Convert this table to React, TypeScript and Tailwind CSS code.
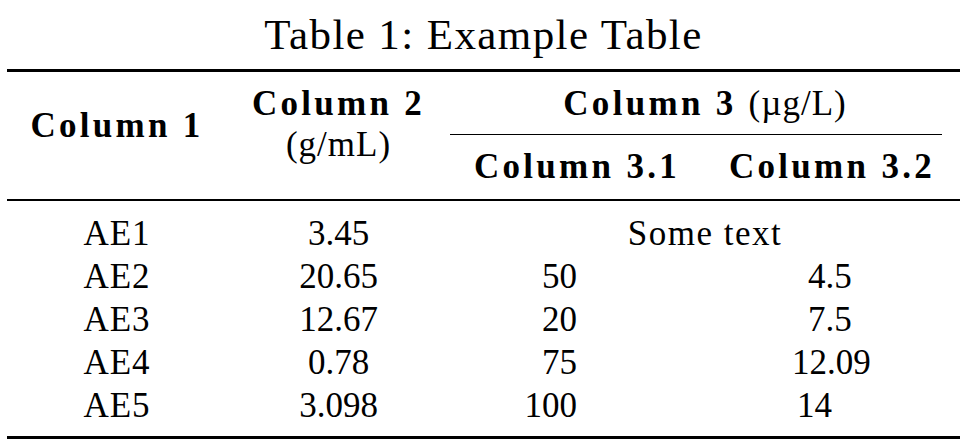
export default function App() {
  const rows = [
    { a: "AE1", b: "3.45", c: "", d: "", dpad: 0, span: "Some text" },
    { a: "AE2", b: "20.65", c: "50", d: "4.5", dpad: 104, span: "" },
    { a: "AE3", b: "12.67", c: "20", d: "7.5", dpad: 104, span: "" },
    { a: "AE4", b: "0.78", c: "75", d: "12.09", dpad: 88, span: "" },
    { a: "AE5", b: "3.098", c: "100", d: "14", dpad: 93, span: "" },
  ];
  return (
    <div
      className="w-[979px] h-[448px] bg-white text-black font-['Liberation_Serif']"
      style={{ fontFamily: '"Liberation Serif", serif' }}
    >
      <div className="ml-[7px] w-[953px] h-[69px] leading-[69px] text-[43px] text-center tracking-[1.4px]">
        Table 1: Example Table
      </div>
      <div className="ml-[7px] w-[953px]">
        <div className="h-[3px] bg-black" />
        <div className="grid grid-cols-[220px_223px_254px_256px] grid-rows-[62px_1px_64px] text-[35px] leading-[35px]">
          <div className="row-span-3 pt-[35.7px] text-center font-bold tracking-[3.3px]">Column 1</div>
          <div className="row-span-3 pt-[13.7px] text-center">
            <div className="font-bold tracking-[3.3px]">Column 2</div>
            <div className="mt-[6px] tracking-[1px]">(g/mL)</div>
          </div>
          <div className="col-span-2 pt-[13.7px] text-center">
            <span className="font-bold tracking-[3.3px]">Column 3 </span>
            <span className="tracking-[1px]">{"(\u00b5g/L)"}</span>
          </div>
          <div className="col-span-2 bg-black mr-[18px]" />
          <div className="pt-[13.7px] text-center font-bold tracking-[3.3px]">Column 3.1</div>
          <div className="pt-[13.7px] text-center font-bold tracking-[3.3px]">Column 3.2</div>
        </div>
        <div className="h-[2px] bg-black" />
        <div className="pt-[10.7px] pb-[9.3px] grid grid-cols-[220px_223px_254px_256px] auto-rows-[43px] text-[35px] leading-[43px]">
          {rows.map((r) => (
            <div key={r.a} className="contents">
              <div className="text-center tracking-[1px]">{r.a}</div>
              <div className="text-center">{r.b}</div>
              {r.span ? (
                <div className="col-span-2 text-center tracking-[1.5px]">{r.span}</div>
              ) : (
                <>
                  <div className="text-right pr-[127px]">{r.c}</div>
                  <div className="text-left" style={{ paddingLeft: r.dpad }}>
                    {r.d}
                  </div>
                </>
              )}
            </div>
          ))}
        </div>
        <div className="h-[3px] bg-black" />
      </div>
    </div>
  );
}
